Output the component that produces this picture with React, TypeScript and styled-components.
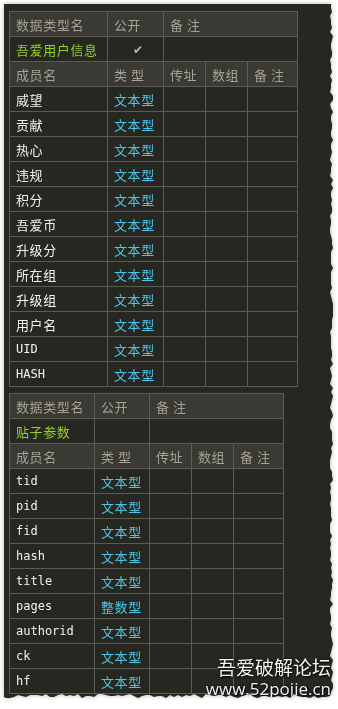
import React from "react";
import styled, { createGlobalStyle } from "styled-components";

type Member = { name: string; type: string };

type TypeTable = {
    title: string;
    open: boolean;
    widths: number[];
    members: Member[];
};

const tables: TypeTable[] = [
    {
        title: "吾爱用户信息",
        open: true,
        widths: [98, 56, 42, 42, 50],
        members: [
            { name: "威望", type: "文本型" },
            { name: "贡献", type: "文本型" },
            { name: "热心", type: "文本型" },
            { name: "违规", type: "文本型" },
            { name: "积分", type: "文本型" },
            { name: "吾爱币", type: "文本型" },
            { name: "升级分", type: "文本型" },
            { name: "所在组", type: "文本型" },
            { name: "升级组", type: "文本型" },
            { name: "用户名", type: "文本型" },
            { name: "UID", type: "文本型" },
            { name: "HASH", type: "文本型" },
        ],
    },
    {
        title: "贴子参数",
        open: false,
        widths: [85, 55, 42, 42, 50],
        members: [
            { name: "tid", type: "文本型" },
            { name: "pid", type: "文本型" },
            { name: "fid", type: "文本型" },
            { name: "hash", type: "文本型" },
            { name: "title", type: "文本型" },
            { name: "pages", type: "整数型" },
            { name: "authorid", type: "文本型" },
            { name: "ck", type: "文本型" },
            { name: "hf", type: "文本型" },
        ],
    },
];

// torn paper edge on the right and bottom
const tornEdge = (() => {
    const pts: string[] = ["0 0", "327px 0"];
    let seed = 7;
    const rnd = () => {
        seed = (seed * 9301 + 49297) % 233280;
        return seed / 233280;
    };
    for (let y = 4; y < 690; y += 4) pts.push(`${326 + Math.round(rnd() * 3)}px ${y}px`);
    for (let x = 326; x > 0; x -= 4) pts.push(`${x}px ${690 + Math.round(rnd() * 4)}px`);
    pts.push("0 693px");
    return `polygon(${pts.join(",")})`;
})();

const isLatin = (s: string) => /^[A-Za-z]+$/.test(s);

const App = () => {
    return (
        <>
            <GlobalStyle />
            <Shadow>
                <Panel style={{ clipPath: tornEdge }}>
                    {tables.map((t, i) => (
                        <Table key={i} style={{ width: t.widths.reduce((a, b) => a + b, 0) }}>
                            <colgroup>
                                {t.widths.map((w, j) => <col key={j} style={{ width: w }} />)}
                            </colgroup>
                            <tbody>
                                <tr>
                                    <Th>数据类型名</Th>
                                    <Th>公开</Th>
                                    <Th colSpan={3}>备 注</Th>
                                </tr>
                                <tr>
                                    <Td tone="green">{t.title}</Td>
                                    <Td tone="check" center>{t.open ? "✔" : ""}</Td>
                                    <Td colSpan={3}></Td>
                                </tr>
                                <tr>
                                    <Th>成员名</Th>
                                    <Th>类 型</Th>
                                    <Th>传址</Th>
                                    <Th>数组</Th>
                                    <Th>备 注</Th>
                                </tr>
                                {t.members.map((m, k) => (
                                    <tr key={k}>
                                        <Td tone="white" mono={isLatin(m.name)}>{m.name}</Td>
                                        <Td tone="cyan">{m.type}</Td>
                                        <Td></Td>
                                        <Td></Td>
                                        <Td></Td>
                                    </tr>
                                ))}
                            </tbody>
                        </Table>
                    ))}
                    <Watermark>
                        <span>吾爱破解论坛</span>
                        <Site>www.52pojie.cn</Site>
                    </Watermark>
                </Panel>
            </Shadow>
        </>
    );
};

const GlobalStyle = createGlobalStyle`
    html, body {
        margin: 0;
        background: #ffffff;
    }
`;

const Shadow = styled.div`
    padding: 4px;
    width: 329px;
    filter: drop-shadow(0 0 2px rgba(0, 0, 0, 0.3));
`;

const Panel = styled.div`
    position: relative;
    box-sizing: border-box;
    width: 329px;
    height: 695px;
    padding: 7px 0 0 5px;
    background: #272721;
    display: flex;
    flex-direction: column;
    gap: 6px;
    align-items: flex-start;
`;

const Table = styled.table`
    border-collapse: collapse;
    table-layout: fixed;
    font-family: "Noto Sans CJK SC", sans-serif;
    font-size: 13px;
    letter-spacing: 0.6px;
`;

const Th = styled.td`
    height: 25px;
    padding: 0 0 0 6px;
    box-sizing: border-box;
    border: 1px solid #5b5b52;
    background: #3a3933;
    color: #a3a294;
    white-space: nowrap;
    line-height: 1;
`;

const tones: Record<string, string> = {
    white: "#f2f2ee",
    cyan: "#4cc6ea",
    green: "#93d41f",
    check: "#b7b7ad",
};

const Td = styled.td<{ tone?: string; mono?: boolean; center?: boolean }>`
    height: 25px;
    padding: 0 0 0 6px;
    box-sizing: border-box;
    border: 1px solid #5b5b52;
    color: ${p => tones[p.tone || "white"]};
    font-family: ${p => (p.mono ? '"DejaVu Sans Mono", monospace' : '"Noto Sans CJK SC", sans-serif')};
    font-size: ${p => (p.mono ? "12px" : p.tone === "check" ? "12px" : "13px")};
    letter-spacing: ${p => (p.mono ? "0" : "0.6px")};
    text-align: ${p => (p.center ? "center" : "left")};
    white-space: nowrap;
    line-height: 1;
`;

const Watermark = styled.div`
    position: absolute;
    right: 2px;
    bottom: 0;
    display: flex;
    flex-direction: column;
    align-items: flex-end;
    color: #f4f4f4;
    font-family: "Noto Sans CJK SC", sans-serif;
    font-size: 19px;
    line-height: 24px;
    text-shadow: 0 0 2px #000, 1px 1px 2px #000;
`;

const Site = styled.span`
    font-family: "Open Sans", "Noto Sans", sans-serif;
    font-size: 17px;
    line-height: 20px;
`;

export default App;
